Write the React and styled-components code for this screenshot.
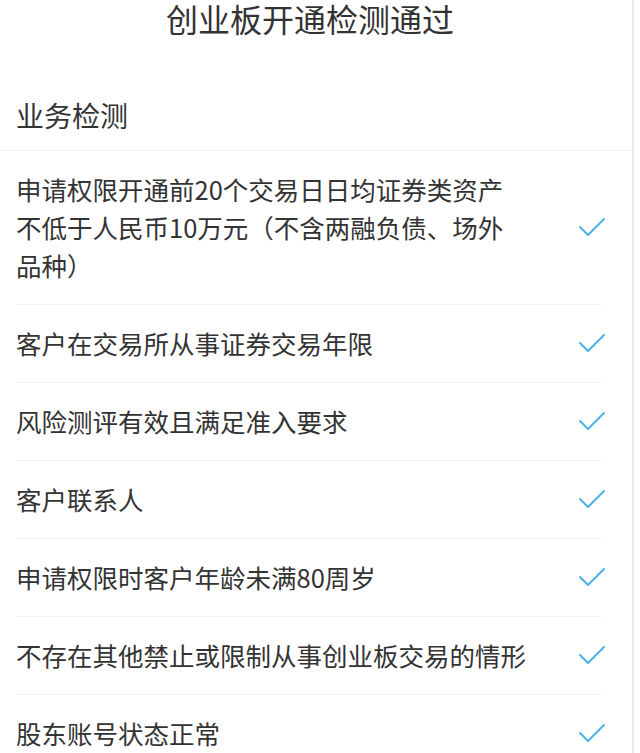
import React from 'react';
import styled, { createGlobalStyle } from 'styled-components';

const GlobalStyle = createGlobalStyle`
  html, body {
    margin: 0;
    padding: 0;
    background: #fff;
  }
  body {
    font-family: "Noto Sans CJK SC", "Noto Sans", sans-serif;
    color: #333;
  }
`;

const Page = styled.div`
  width: 632px;
  height: 753px;
  overflow: hidden;
  border-right: 2px solid #ececec;
  background: #fff;
`;

const Title = styled.h1`
  margin: 0;
  height: 80px;
  padding: 0 12px 0 0;
  font-size: 32px;
  font-weight: 400;
  line-height: 36px;
  text-align: center;
  color: #333;
`;

const SectionHeader = styled.div`
  height: 70px;
  line-height: 70px;
  padding-left: 16px;
  font-size: 28px;
  color: #333;
  border-bottom: 1px solid #f1f1f1;
`;

const List = styled.ul`
  list-style: none;
  margin: 0;
  padding: 0 30px 0 16px;
`;

const Row = styled.li`
  display: flex;
  align-items: center;
  padding: 19px 0 20px;
  border-bottom: 1px solid #f1f1f1;
`;

const TextCell = styled.div`
  flex: 1;
  min-width: 0;
`;

const RowText = styled.span`
  display: block;
  max-width: ${p => (p.$wrap ? '500px' : 'none')};
  font-size: 25.5px;
  line-height: 38px;
  color: #333;
`;

const Check = styled.svg`
  flex: none;
  width: 28px;
  height: 20px;
  margin-left: 12px;
  margin-right: -4px;
`;

const CheckIcon = () => (
  <Check viewBox="0 0 28 20">
    <path
      d="M2 10 L10 18 L26 2"
      fill="none"
      stroke="#4cb1e6"
      strokeWidth="2"
      strokeLinecap="round"
      strokeLinejoin="round"
    />
  </Check>
);

const items = [
  { text: '申请权限开通前20个交易日日均证券类资产不低于人民币10万元（不含两融负债、场外品种）', wrap: true },
  { text: '客户在交易所从事证券交易年限' },
  { text: '风险测评有效且满足准入要求' },
  { text: '客户联系人' },
  { text: '申请权限时客户年龄未满80周岁' },
  { text: '不存在其他禁止或限制从事创业板交易的情形' },
  { text: '股东账号状态正常' },
];

export default function App() {
  return (
    <>
      <GlobalStyle />
      <Page>
        <Title>创业板开通检测通过</Title>
        <SectionHeader>业务检测</SectionHeader>
        <List>
          {items.map(item => (
            <Row key={item.text}>
              <TextCell>
                <RowText $wrap={item.wrap}>{item.text}</RowText>
              </TextCell>
              <CheckIcon />
            </Row>
          ))}
        </List>
      </Page>
    </>
  );
}
